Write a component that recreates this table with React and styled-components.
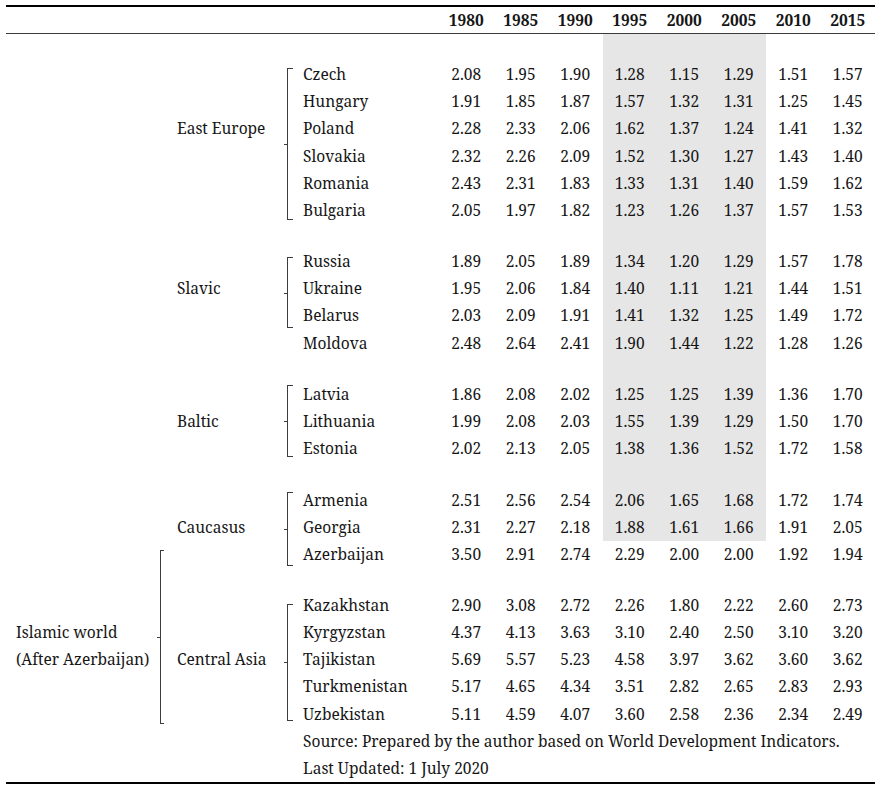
import React from "react";
import styled, { createGlobalStyle } from "styled-components";

const GlobalStyle = createGlobalStyle`
  body {
    margin: 0;
    background: #fff;
  }
`;

const Table = styled.table`
  margin: 5px 0 0 6px;
  width: 869px;
  table-layout: fixed;
  border-collapse: separate;
  border-spacing: 0;
  border-top: 2px solid #000;
  border-bottom: 2px solid #000;
  font-family: "Noto Serif", "Liberation Serif", serif;
  font-size: 15.5px;
  color: #161616;
`;

const HeadCell = styled.th`
  height: 26px;
  padding: 0;
  font-weight: 700;
  text-align: center;
  vertical-align: middle;
  border-bottom: 1px solid #3a3a3a;
`;

const Row = styled.tr`
  height: ${(p) => p.$h}px;
`;

const Cell = styled.td`
  padding: 0 0 0 ${(p) => p.$pad || 0}px;
  white-space: nowrap;
  vertical-align: middle;
`;

const Num = styled.td`
  padding: 0;
  text-align: center;
  vertical-align: middle;
  background: ${(p) => (p.$shade ? "#e6e6e6" : "transparent")};
`;

const BracketCell = styled.td`
  padding: ${(p) => p.$top}px 0 0 0;
  vertical-align: top;
`;

const Bracket = styled.div`
  position: relative;
  box-sizing: border-box;
  margin-left: ${(p) => p.$x}px;
  width: ${(p) => p.$hook}px;
  height: ${(p) => p.$len}px;
  border: 1px solid #3c3c3c;
  border-right: none;

  &::after {
    content: "";
    position: absolute;
    left: -4px;
    top: 50%;
    width: 4px;
    height: 1px;
    background: #3c3c3c;
  }
`;

const Note = styled.td`
  padding: 0 0 0 6px;
  white-space: nowrap;
  vertical-align: middle;
`;

const years = [1980, 1985, 1990, 1995, 2000, 2005, 2010, 2015];
const shaded = [false, false, false, true, true, true, false, false];
const ROW = 27.2;

// d/b: bracket object = starts a bracket, "skip" = covered by rowSpan
const rows = [
  { gap: 26.5, shade: true },
  { name: "Czech", v: [2.08, 1.95, 1.9, 1.28, 1.15, 1.29, 1.51, 1.57], shade: true, d: { span: 6, top: 7.6, len: 152 } },
  { name: "Hungary", v: [1.91, 1.85, 1.87, 1.57, 1.32, 1.31, 1.25, 1.45], shade: true, d: "skip" },
  { name: "Poland", v: [2.28, 2.33, 2.06, 1.62, 1.37, 1.24, 1.41, 1.32], shade: true, d: "skip", c: "East Europe" },
  { name: "Slovakia", v: [2.32, 2.26, 2.09, 1.52, 1.3, 1.27, 1.43, 1.4], shade: true, d: "skip" },
  { name: "Romania", v: [2.43, 2.31, 1.83, 1.33, 1.31, 1.4, 1.59, 1.62], shade: true, d: "skip" },
  { name: "Bulgaria", v: [2.05, 1.97, 1.82, 1.23, 1.26, 1.37, 1.57, 1.53], shade: true, d: "skip" },
  { gap: 23.8, shade: true },
  { name: "Russia", v: [1.89, 2.05, 1.89, 1.34, 1.2, 1.29, 1.57, 1.78], shade: true, d: { span: 3, top: 9.6, len: 71 } },
  { name: "Ukraine", v: [1.95, 2.06, 1.84, 1.4, 1.11, 1.21, 1.44, 1.51], shade: true, d: "skip", c: "Slavic" },
  { name: "Belarus", v: [2.03, 2.09, 1.91, 1.41, 1.32, 1.25, 1.49, 1.72], shade: true, d: "skip" },
  { name: "Moldova", v: [2.48, 2.64, 2.41, 1.9, 1.44, 1.22, 1.28, 1.26], shade: true },
  { gap: 24.2, shade: true },
  { name: "Latvia", v: [1.86, 2.08, 2.02, 1.25, 1.25, 1.39, 1.36, 1.7], shade: true, d: { span: 3, top: 4.6, len: 72 } },
  { name: "Lithuania", v: [1.99, 2.08, 2.03, 1.55, 1.39, 1.29, 1.5, 1.7], shade: true, d: "skip", c: "Baltic" },
  { name: "Estonia", v: [2.02, 2.13, 2.05, 1.38, 1.36, 1.52, 1.72, 1.58], shade: true, d: "skip" },
  { gap: 24.4, shade: true },
  { name: "Armenia", v: [2.51, 2.56, 2.54, 2.06, 1.65, 1.68, 1.72, 1.74], shade: true, d: { span: 3, top: 5.6, len: 74 } },
  { name: "Georgia", v: [2.31, 2.27, 2.18, 1.88, 1.61, 1.66, 1.91, 2.05], shade: true, d: "skip", c: "Caucasus" },
  { name: "Azerbaijan", v: [3.5, 2.91, 2.74, 2.29, 2.0, 2.0, 1.92, 1.94], d: "skip", b: { span: 7, top: 9.2, len: 174 } },
  { gap: 23.4, b: "skip" },
  { name: "Kazakhstan", v: [2.9, 3.08, 2.72, 2.26, 1.8, 2.22, 2.6, 2.73], b: "skip", d: { span: 5, top: 12.6, len: 117 } },
  { name: "Kyrgyzstan", v: [4.37, 4.13, 3.63, 3.1, 2.4, 2.5, 3.1, 3.2], b: "skip", d: "skip", a: "Islamic world" },
  { name: "Tajikistan", v: [5.69, 5.57, 5.23, 4.58, 3.97, 3.62, 3.6, 3.62], b: "skip", d: "skip", a: "(After Azerbaijan)", c: "Central Asia" },
  { name: "Turkmenistan", v: [5.17, 4.65, 4.34, 3.51, 2.82, 2.65, 2.83, 2.93], b: "skip", d: "skip" },
  { name: "Uzbekistan", v: [5.11, 4.59, 4.07, 3.6, 2.58, 2.36, 2.34, 2.49], b: "skip", d: "skip" },
];

const notes = [
  "Source: Prepared by the author based on World Development Indicators.",
  "Last Updated: 1 July 2020",
];

const BracketSlot = ({ br, x, hook }) => {
  if (br === "skip") return null;
  if (!br) return <Cell />;
  return (
    <BracketCell rowSpan={br.span} $top={br.top}>
      <Bracket $x={x} $hook={hook} $len={br.len} />
    </BracketCell>
  );
};

const Values = ({ v, shade }) =>
  years.map((y, i) => (
    <Num key={y} $shade={shade && shaded[i]}>
      {v ? v[i].toFixed(2) : null}
    </Num>
  ));

const App = () => (
  <>
    <GlobalStyle />
    <Table>
      <colgroup>
        <col style={{ width: 151 }} />
        <col style={{ width: 14 }} />
        <col style={{ width: 112 }} />
        <col style={{ width: 14 }} />
        <col style={{ width: 142 }} />
        {years.map((y) => (
          <col key={y} style={{ width: 54.5 }} />
        ))}
      </colgroup>
      <thead>
        <tr>
          <HeadCell colSpan={5} />
          {years.map((y) => (
            <HeadCell key={y}>{y}</HeadCell>
          ))}
        </tr>
      </thead>
      <tbody>
        {rows.map((r, i) =>
          r.gap ? (
            <Row key={i} $h={r.gap}>
              <Cell />
              {r.b !== "skip" && <Cell />}
              <Cell colSpan={3} />
              <Values shade={r.shade} />
            </Row>
          ) : (
            <Row key={i} $h={ROW}>
              <Cell $pad={10}>{r.a}</Cell>
              <BracketSlot br={r.b} x={3} hook={4} />
              <Cell $pad={6}>{r.c}</Cell>
              <BracketSlot br={r.d} x={4} hook={6} />
              <Cell $pad={6}>{r.name}</Cell>
              <Values v={r.v} shade={r.shade} />
            </Row>
          )
        )}
        {notes.map((n) => (
          <Row key={n} $h={ROW}>
            <Cell colSpan={4} />
            <Note colSpan={9}>{n}</Note>
          </Row>
        ))}
      </tbody>
    </Table>
  </>
);

export default App;
